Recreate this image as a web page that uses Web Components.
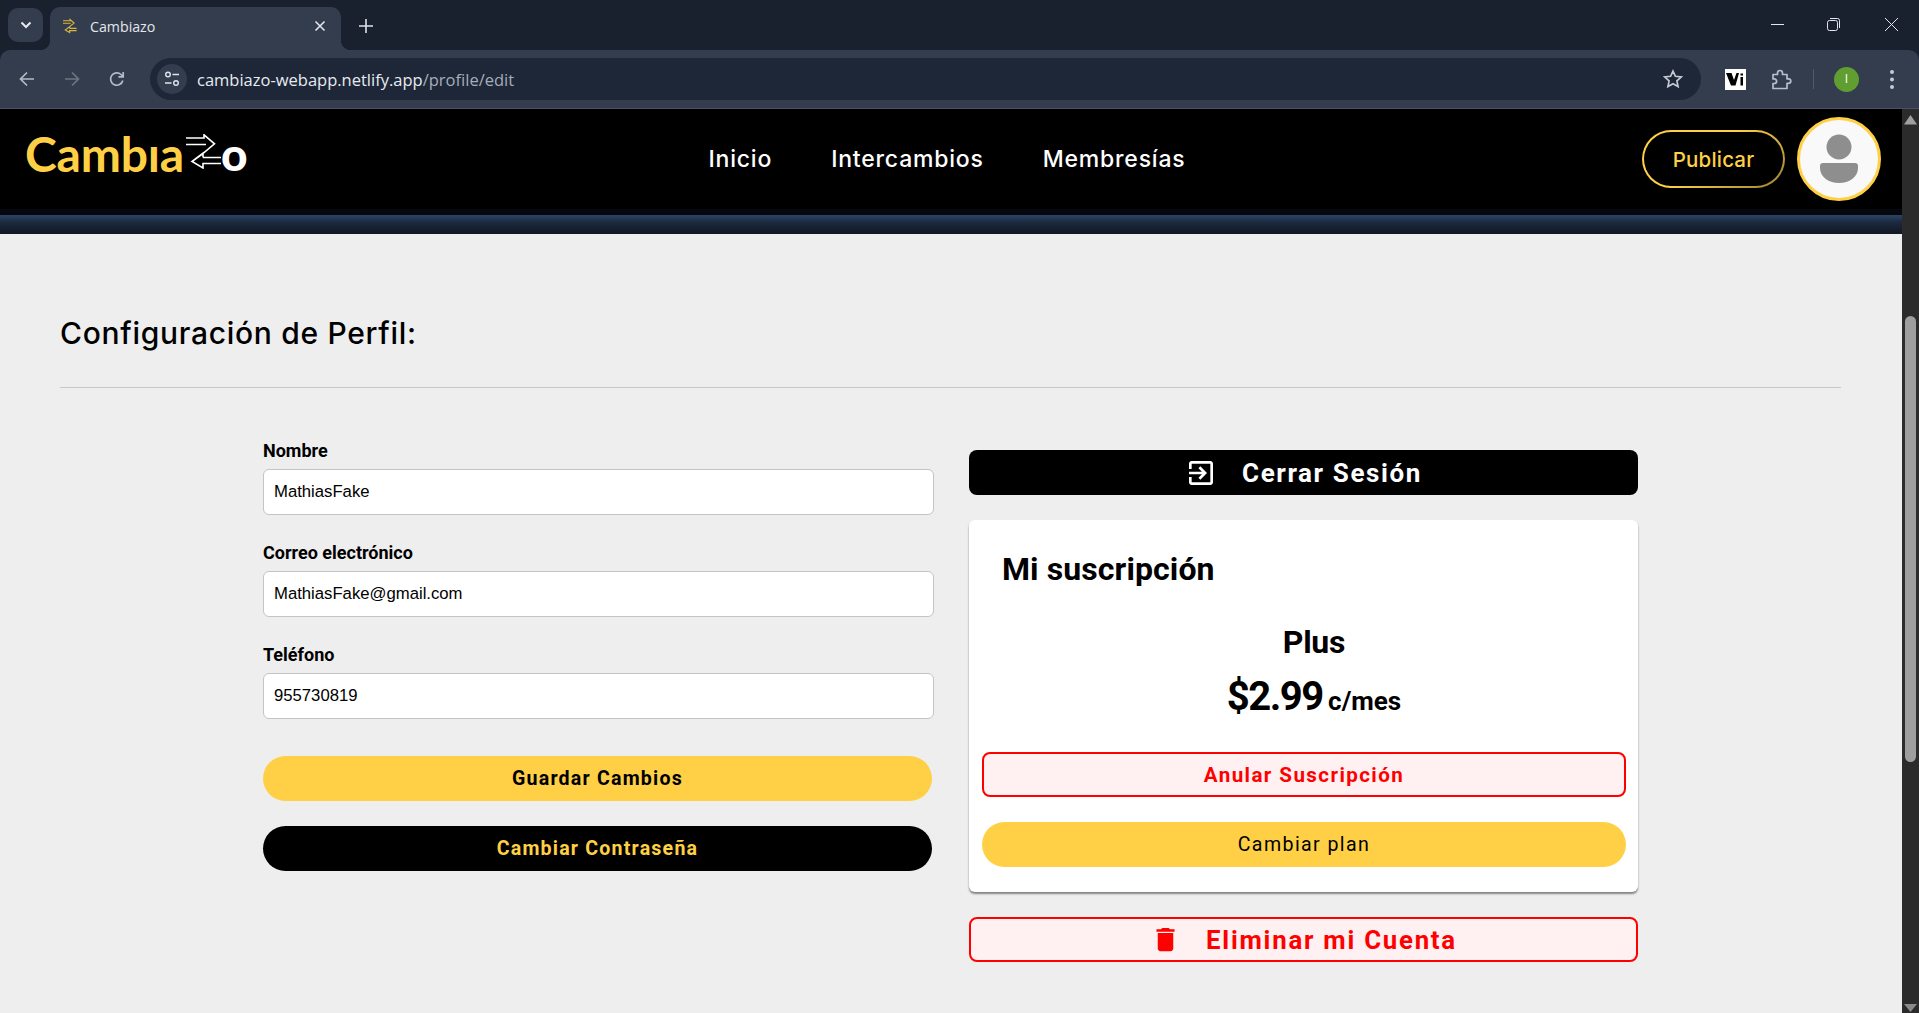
<!DOCTYPE html>
<html lang="es">
<head>
<meta charset="utf-8">
<title>Cambiazo</title>
<style>
  html, body { margin: 0; height: 1013px; overflow: hidden; background: #eee; }
  body { display: flex; flex-direction: column; font-family: "Roboto", "Liberation Sans", sans-serif; }
</style>
</head>
<body>
<browser-chrome title-text="Cambiazo" url-host="cambiazo-webapp.netlify.app" url-path="/profile/edit"></browser-chrome>
<app-viewport>
  <site-header></site-header>
  <profile-page></profile-page>
</app-viewport>

<script>
const SWAP_ARROWS = `
  <path d="M0 4H18V.8L28.5 9.8 18 18.5 6 27.5 17 34V29.5H35M0 10.5H20M17 23.5H35M6 27.5 17 19.5V23.5" fill="none" stroke="currentColor" stroke-width="1.6"/>`;

class BrowserChrome extends HTMLElement {
    constructor() {
        super();
        this.attachShadow({ mode: 'open' });
        const title = this.getAttribute('title-text');
        const host = this.getAttribute('url-host');
        const path = this.getAttribute('url-path');
        this.shadowRoot.innerHTML = `
      <style>
        :host { display: block; background: #19212f; color: #dfe3ea; font-family: "Open Sans", "Liberation Sans", sans-serif; }
        svg { display: block; flex: none; }
        #strip { height: 50px; display: flex; align-items: flex-end; padding-left: 8px; }
        #tab-menu {
          width: 35px; height: 34px; margin-bottom: 8px; border-radius: 10px; background: #343d4e;
          display: flex; align-items: center; justify-content: center;
        }
        #tab {
          width: 291px; height: 43px; margin-left: 7px; background: #343d4e; border-radius: 10px 10px 0 0;
          display: flex; align-items: center; box-sizing: border-box; padding: 0 15px 5px 13px; position: relative;
        }
        #tab::before, #tab::after {
          content: ""; position: absolute; bottom: 0; width: 10px; height: 10px;
        }
        #tab::before { left: -10px; background: radial-gradient(circle at 0 0, transparent 10px, #343d4e 10.5px); }
        #tab::after { right: -10px; background: radial-gradient(circle at 100% 0, transparent 10px, #343d4e 10.5px); }
        #tab-title { margin-left: 13px; font-size: 14.2px; flex: 1; color: #e3e6ec; }
        #favicon { color: #d9b63f; }
        #new-tab { margin: 0 0 17px 18px; }
        #window { margin: 0 0 0 auto; display: flex; align-self: flex-start; align-items: center; gap: 43px; padding: 18px 21px 0 0; }
        #window svg:last-child { margin-left: 2px; }
        #toolbar {
          height: 58px; background: #343d4e; border-radius: 10px 10px 0 0; border-bottom: 1px solid #4a5262;
          display: flex; align-items: center; padding-left: 18px; padding-right: 19px;
        }
        #nav { display: flex; gap: 27px; align-items: center; }
        #omni {
          margin-left: 24px; height: 42px; width: 1551px; border-radius: 21px; background: #1d2738;
          display: flex; align-items: center; padding: 0 18px 0 7px; box-sizing: border-box;
        }
        #site {
          width: 30px; height: 30px; border-radius: 50%; background: #343d4e; flex: none;
          display: flex; align-items: center; justify-content: center;
        }
        #url { margin-left: 10px; font-size: 16.5px; color: #e8ebf0; flex: 1; }
        #url span { color: #a6adba; }
        #ext { display: flex; align-items: center; }
        #ext-v {
          width: 21px; height: 21px; background: #fff; margin-left: 24px; display: flex; align-items: center; justify-content: center;
        }
        #sep { width: 1px; height: 20px; background: #525b6c; margin-left: 21px; }
        #profile {
          width: 25px; height: 25px; border-radius: 50%; background: #609e31; margin-left: 20px; color: #fff;
          display: flex; align-items: center; justify-content: center; font-size: 12px; line-height: 1;
        }
      </style>
      <div id="strip">
        <div id="tab-menu">
          <svg width="14" height="14" viewBox="0 0 14 14"><path d="M2.5 4.5 7 9l4.5-4.5" fill="none" stroke="#e6e9ef" stroke-width="2"/></svg>
        </div>
        <div id="tab">
          <svg id="favicon" width="14" height="16" viewBox="0 0 36 35">${SWAP_ARROWS.replace('1.6', '3')}</svg>
          <span id="tab-title">${title}</span>
          <svg width="12" height="12" viewBox="0 0 12 12"><path d="M1.500 1.500l9 9m0-9-9 9" stroke="#e3e6ec" stroke-width="1.600"/></svg>
        </div>
        <svg id="new-tab" width="14" height="14" viewBox="0 0 14 14"><path d="M7 0v14M0 7h14" stroke="#dfe3ea" stroke-width="1.600"/></svg>
        <div id="window">
          <svg width="13" height="13" viewBox="0 0 13 13"><path d="M0 6.500h13" stroke="#e3e6ec"/></svg>
          <svg width="13" height="13" viewBox="0 0 13 13"><rect x=".5" y="2.500" width="10" height="10" rx="2" fill="none" stroke="#e3e6ec"/><path d="M3 .5h7.500a2 2 0 0 1 2 2V10" fill="none" stroke="#e3e6ec"/></svg>
          <svg width="13" height="13" viewBox="0 0 13 13"><path d="M0 0l13 13M13 0 0 13" stroke="#e3e6ec"/></svg>
        </div>
      </div>
      <div id="toolbar">
        <div id="nav">
          <svg width="18" height="18" viewBox="0 0 18 18"><path d="M16 9H3M9 2.500 2.500 9 9 15.500" fill="none" stroke="#b4bac6" stroke-width="1.700"/></svg>
          <svg width="18" height="18" viewBox="0 0 18 18"><path d="M2 9h13M9 2.500 15.500 9 9 15.500" fill="none" stroke="#6e7583" stroke-width="1.700"/></svg>
          <svg width="18" height="18" viewBox="0 0 18 18"><path d="M14.800 10.500A6.200 6.200 0 1 1 13 4.500L15 6.500M15.200 2v4.800h-4.800" fill="none" stroke="#b4bac6" stroke-width="1.700"/></svg>
        </div>
        <div id="omni">
          <div id="site">
            <svg width="16" height="16" viewBox="0 0 16 16"><circle cx="4" cy="3.500" r="2.300" fill="none" stroke="#dfe3ea" stroke-width="1.400"/><path d="M8.500 3.500H15M1 12h6.500" stroke="#dfe3ea" stroke-width="1.400"/><circle cx="12" cy="12" r="2.300" fill="none" stroke="#dfe3ea" stroke-width="1.400"/></svg>
          </div>
          <div id="url">${host}<span>${path}</span></div>
          <svg width="20" height="20" viewBox="0 0 24 24"><path d="M12 2.500l2.900 6.300 6.900.8-5.100 4.700 1.400 6.800-6.100-3.400-6.100 3.400 1.400-6.800-5.100-4.700 6.900-.8z" fill="none" stroke="#c5cad4" stroke-width="2"/></svg>
        </div>
        <div id="ext">
          <div id="ext-v">
            <svg width="19" height="14" viewBox="0 0 19 14"><path d="M0 1h5.500l2.500 7L10.500 1H13L9.500 13.500H5z" fill="#000"/><path d="M14.500 5h2.500v8.500h-2.500z" fill="#000"/><path d="M14.500 1.500h2.500v2h-2.500z" fill="#000"/></svg>
          </div>
          <svg style="margin-left:25px" width="21" height="21" viewBox="0 0 21 21"><path d="M2 5.500h4.500V4a2.500 2.500 0 0 1 5 0v1.500H16v4.300h1.500a2.300 2.300 0 0 1 0 4.600H16V19.500H2v-5h1.300a2.300 2.300 0 0 0 0-4.600H2z" fill="none" stroke="#b8bfcc" stroke-width="1.700" stroke-linejoin="round"/></svg>
          <div id="sep"></div>
          <div id="profile">I</div>
          <svg style="margin-left:31px" width="4" height="19" viewBox="0 0 4 19"><circle cx="2" cy="2" r="2" fill="#c5cad4"/><circle cx="2" cy="9.500" r="2" fill="#c5cad4"/><circle cx="2" cy="17" r="2" fill="#c5cad4"/></svg>
        </div>
      </div>
    `;
    }
}
customElements.define('browser-chrome', BrowserChrome);

// page area next to the fake scrollbar
class AppViewport extends HTMLElement {
    constructor() {
        super();
        this.attachShadow({ mode: 'open' });
        this.shadowRoot.innerHTML = `
      <style>
        :host { display: flex; flex: 1; min-height: 0; background: #eee; }
        #content { flex: 1; min-width: 0; overflow: hidden; }
        #bar {
          width: 17px; background: #2b2b2b; display: flex; flex-direction: column; align-items: center; box-sizing: border-box; padding: 6px 0 0;
        }
        #thumb { width: 11px; height: 446px; margin-top: 191px; border-radius: 6px; background: #9e9e9e; }
        #down { margin-top: auto; margin-bottom: 1px; }
        svg { display: block; }
      </style>
      <div id="content"><slot></slot></div>
      <div id="bar">
        <svg width="13" height="10" viewBox="0 0 13 10"><path d="M6.500 0 13 9.500H0z" fill="#a0a0a0"/></svg>
        <div id="thumb"></div>
        <svg id="down" width="13" height="8" viewBox="0 0 13 8"><path d="M0 0h13L6.500 8z" fill="#8a8a8a"/></svg>
      </div>
    `;
    }
}
customElements.define('app-viewport', AppViewport);

class SiteHeader extends HTMLElement {
    constructor() {
        super();
        this.attachShadow({ mode: 'open' });
        this.shadowRoot.innerHTML = `
      <style>
        :host { display: block; font-family: "Inter", "Liberation Sans", sans-serif; }
        #bar {
          height: 100px; background: #000; display: grid; grid-template-columns: 1fr auto 1fr; align-items: center;
        }
        #logo {
          display: flex; align-items: flex-start; padding-left: 25px; height: 40px; font-family: "Lato", sans-serif; font-weight: 700;
          font-size: 48px; line-height: 40px; margin-top: -11px;
        }
        #logo b { color: #ffd045; font-weight: 700; letter-spacing: -.2px; }
        #logo i { color: #fff; font-style: normal; font-weight: 900; margin-left: -1px; font-size: 46px; }
        #logo svg { color: #fff; margin: 0 0 0 2px; flex: none; }
        nav { display: flex; gap: 59px; margin-left: -8px; }
        nav a { color: #fff; font-size: 23px; font-weight: 500; letter-spacing: .8px; text-decoration: none; }
        #right { display: flex; justify-content: flex-end; align-items: center; padding-right: 21px; }
        #publish {
          width: 143px; height: 58px; box-sizing: border-box; border-radius: 29px; border: 2px solid transparent;
          background: linear-gradient(#000, #000) padding-box, linear-gradient(140deg, #ffd045 45%, #9c8232) border-box;
          color: #ffd045; font: 500 20.500px "Inter", sans-serif; letter-spacing: .2px; margin: 0 12px 0 0; padding: 0;
        }
        #avatar {
          width: 84px; height: 84px; box-sizing: border-box; border-radius: 50%; border: 3px solid #ffd045; background: #f9f9f9;
          display: flex; align-items: center; justify-content: center;
        }
        #band {
          height: 25px; background: linear-gradient(#06070f 0 6px, #2d4466 6px, #1c2a40 13px, #111722 25px);
        }
      </style>
      <div id="bar">
        <div id="logo"><b>Cambıa</b><svg width="36" height="35" viewBox="0 0 36 35">${SWAP_ARROWS}</svg><i>o</i></div>
        <nav><a>Inicio</a><a>Intercambios</a><a>Membresías</a></nav>
        <div id="right">
          <button id="publish">Publicar</button>
          <div id="avatar">
            <svg width="40" height="50" viewBox="0 0 40 50"><circle cx="20" cy="13" r="12.500" fill="#8e8e8e"/><path d="M1 32a3 3 0 0 1 3-3h32a3 3 0 0 1 3 3v2c0 9-9 15-19 15S1 43 1 34z" fill="#8e8e8e"/></svg>
          </div>
        </div>
      </div>
      <div id="band"></div>
    `;
    }
}
customElements.define('site-header', SiteHeader);

class FormField extends HTMLElement {
    constructor() {
        super();
        this.attachShadow({ mode: 'open' });
        this.shadowRoot.innerHTML = `
      <style>
        :host { display: block; margin-bottom: 28px; }
        label { display: block; font: 700 18px/20px "Roboto", sans-serif; color: #000; margin-bottom: 8px; }
        input {
          display: block; width: 100%; height: 46px; box-sizing: border-box; border: 1px solid #c4c4c4; border-radius: 6px; background: #fff;
          padding: 0 10px; font: 16.700px "Liberation Sans", Arial, sans-serif; color: #000; outline: none;
        }
      </style>
      <label>${this.getAttribute('label')}</label>
      <input value="${this.getAttribute('value')}">
    `;
    }
}
customElements.define('form-field', FormField);

class ActionButton extends HTMLElement {
    constructor() {
        super();
        this.attachShadow({ mode: 'open' });
        this.shadowRoot.innerHTML = `
      <style>
        :host { display: block; }
        button {
          width: 100%; height: 45px; box-sizing: border-box; border: 0; padding: 0; cursor: pointer;
          display: flex; align-items: center; justify-content: center; gap: 25px;
          font: 700 19.600px "Roboto", sans-serif; letter-spacing: 1.200px;
        }
        :host([kind="primary"]) button { background: #ffd045; color: #000; border-radius: 23px; }
        :host([kind="dark"]) button { background: #000; color: #ffd045; border-radius: 23px; }
        :host([kind="logout"]) button { background: #000; color: #fff; border-radius: 8px; font-size: 26px; letter-spacing: 1.600px; }
        :host([kind="danger"]) button { background: #fff1f1; color: #f00; border: 2px solid #f00; border-radius: 8px; font-size: 20.600px; letter-spacing: 1.400px; }
        :host([kind="danger-big"]) button { background: #fff1f1; color: #f00; border: 2px solid #f00; border-radius: 8px; font-size: 25.800px; letter-spacing: 1.750px; }
        :host([kind="primary-soft"]) button { background: #ffd045; color: #000; border-radius: 23px; font-weight: 400; letter-spacing: 1.400px; }
        ::slotted(svg) { display: block; flex: none; }
      </style>
      <button><slot></slot></button>
    `;
    }
}
customElements.define('action-button', ActionButton);

class SubscriptionCard extends HTMLElement {
    constructor() {
        super();
        this.attachShadow({ mode: 'open' });
        this.shadowRoot.innerHTML = `
      <style>
        :host {
          display: block; background: #fff; border-radius: 6px; box-shadow: 0 2px 2px rgba(0,0,0,.45);
          padding: 0 12px 25px 13px; color: #000;
        }
        h2 { margin: 0; padding: 28px 0 0 20px; font: 700 32px/42px "Roboto", sans-serif; letter-spacing: .1px; }
        #plan { margin: 0 0 0 20px; padding-top: 31px; text-align: center; font: 700 32px/42px "Roboto", sans-serif; letter-spacing: -.3px; }
        #price { margin: 0 0 0 20px; padding-top: 9px; text-align: center; font: 700 40px/50px "Roboto", sans-serif; letter-spacing: -1.500px; }
        #price small { font-size: 26px; margin-left: -3px; letter-spacing: 0; }
        #actions { display: flex; flex-direction: column; gap: 25px; margin-top: 26px; }
      </style>
      <h2>Mi suscripción</h2>
      <div id="plan">Plus</div>
      <div id="price">$2.99 <small>c/mes</small></div>
      <div id="actions"><slot></slot></div>
    `;
    }
}
customElements.define('subscription-card', SubscriptionCard);

class ProfilePage extends HTMLElement {
    constructor() {
        super();
        this.attachShadow({ mode: 'open' });
        this.shadowRoot.innerHTML = `
      <style>
        :host { display: block; padding: 82px 61px 0 60px; color: #000; }
        h1 { margin: 0; font: 500 30px/34px "Inter", sans-serif; letter-spacing: .7px; }
        hr { margin: 37px 0 0; border: 0; border-top: 1px solid #c8c8c8; }
        #grid { width: 1375px; margin: 53px auto 0; display: grid; grid-template-columns: 671px 669px; column-gap: 35px; align-items: start; }
        #form-col { display: flex; flex-direction: column; }
        #form-col action-button { width: 669px; margin-top: 25px; }
        #form-col form-field:last-of-type { margin-bottom: 12px; }
        #side { display: flex; flex-direction: column; gap: 25px; padding-top: 9px; }
      </style>
      <h1>Configuración de Perfil:</h1>
      <hr>
      <div id="grid">
        <div id="form-col">
          <form-field label="Nombre" value="MathiasFake"></form-field>
          <form-field label="Correo electrónico" value="MathiasFake@gmail.com"></form-field>
          <form-field label="Teléfono" value="955730819"></form-field>
          <action-button kind="primary">Guardar Cambios</action-button>
          <action-button kind="dark">Cambiar Contraseña</action-button>
        </div>
        <div id="side">
          <action-button kind="logout">
            <svg width="32" height="32" viewBox="0 0 24 24" fill="#fff"><path d="M10.090 15.590L11.500 17l5-5-5-5-1.410 1.410L12.670 11H3v2h9.670l-2.580 2.590zM19 3H5c-1.110 0-2 .9-2 2v4h2V5h14v14H5v-4H3v4c0 1.100.89 2 2 2h14c1.100 0 2-.9 2-2V5c0-1.100-.9-2-2-2z"/></svg>
            Cerrar Sesión
          </action-button>
          <subscription-card>
            <action-button kind="danger">Anular Suscripción</action-button>
            <action-button kind="primary-soft">Cambiar plan</action-button>
          </subscription-card>
          <action-button kind="danger-big">
            <svg width="31" height="31" viewBox="0 0 24 24" fill="#f00"><path d="M6 19c0 1.100.9 2 2 2h8c1.100 0 2-.9 2-2V7H6v12zM19 4h-3.500l-1-1h-5l-1 1H5v2h14V4z"/></svg>
            Eliminar mi Cuenta
          </action-button>
        </div>
      </div>
    `;
    }
}
customElements.define('profile-page', ProfilePage);
</script>
</body>
</html>
